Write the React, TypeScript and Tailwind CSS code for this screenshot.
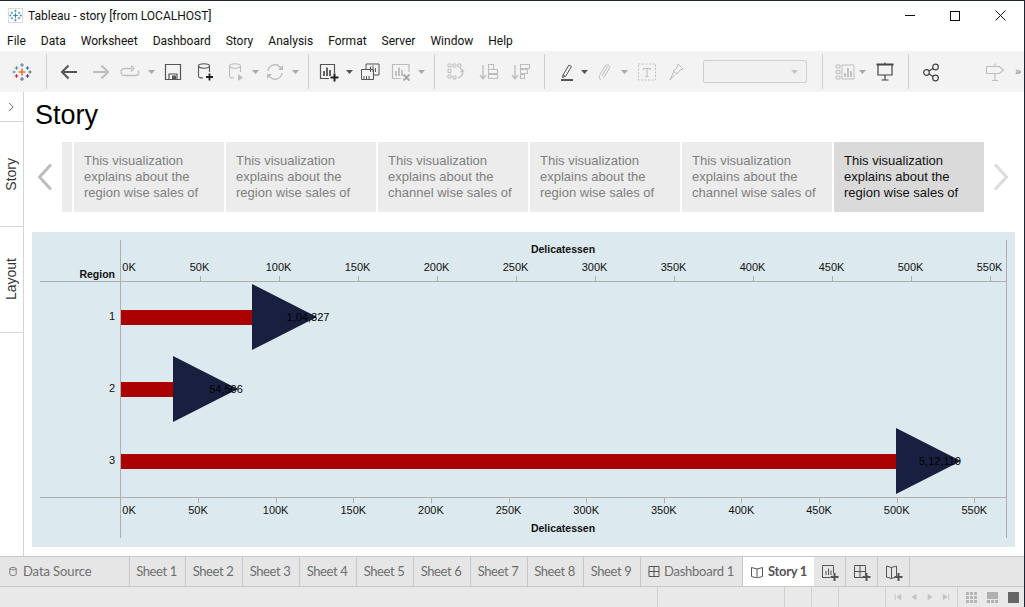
const ON = "#555555";
const OFF = "#bdbdbd";

function Ico({ children, className }: { children: React.ReactNode; className: string }) {
  return (
    <svg viewBox="0 0 20 20" fill="none" className={"w-[20px] h-[20px] shrink-0 " + className}>
      {children}
    </svg>
  );
}

function Caret({ className, color = "#a8a8a8" }: { className: string; color?: string }) {
  return (
    <svg viewBox="0 0 7 4" className={"w-[7px] h-[4px] shrink-0 " + className}>
      <path d="M0 0h7L3.5 4z" fill={color} />
    </svg>
  );
}

function Sep({ className }: { className: string }) {
  return <div className={"w-px h-[35px] bg-[#cfcfcf] shrink-0 " + className} />;
}

function TableauLogo({ size, mono }: { size: number; mono?: string }) {
  const marks: [number, number, number, string][] = [
    [10, 10, 3.4, "#e8762d"],
    [10, 3, 2, "#5b879b"],
    [10, 17, 2, "#5c6692"],
    [4.5, 6, 1.8, "#59879b"],
    [15.5, 6, 1.8, "#1f77b4"],
    [4.5, 14, 1.8, "#c72035"],
    [15.5, 14, 1.8, "#1f447a"],
    [2, 10, 1.6, "#7199a6"],
    [18, 10, 1.6, "#5b6591"],
  ];
  return (
    <svg viewBox="0 0 20 20" width={size} height={size} className="shrink-0">
      {marks.map(([x, y, r, c], i) => (
        <path key={i} d={`M${x - r} ${y}H${x + r}M${x} ${y - r}V${y + r}`} stroke={mono ?? c} strokeWidth={r > 3 ? 1.6 : 1.1} />
      ))}
    </svg>
  );
}

function Toolbar() {
  return (
    <div className="h-[41px] bg-[#f3f3f3] flex items-center shrink-0">
      <div className="ml-[12px]"><TableauLogo size={20} /></div>
      <Sep className="ml-[14px]" />
      <Ico className="ml-[12px]">
        <path d="M18 10H3M9.5 3.5L3 10l6.5 6.5" stroke={ON} strokeWidth="2" />
      </Ico>
      <Ico className="ml-[12px]">
        <path d="M2 10h15M10.5 3.5L17 10l-6.500 6.500" stroke={OFF} strokeWidth="2" />
      </Ico>
      <Ico className="ml-[9px]">
        <path d="M12 6.500H4.500a3 3 0 0 0 0 7h11a3 3 0 0 0 2.500-5M11 3.500l3 3-3 3" stroke={OFF} strokeWidth="1.300" />
      </Ico>
      <Caret className="ml-[8px]" />
      <Ico className="ml-[8px]">
        <path d="M2.500 2.500h15v15h-15z" stroke={ON} strokeWidth="1.200" />
        <path d="M6 17v-5h8v5" stroke={ON} strokeWidth="1.200" />
        <path d="M9 13.500h4v3.500H9z" fill={ON} />
      </Ico>
      <Ico className="ml-[12px]">
        <ellipse cx="9" cy="4" rx="5.500" ry="2.200" stroke={ON} strokeWidth="1.100" />
        <path d="M3.500 4v10c0 1.300 2 2 4.500 2M14.500 4v6" stroke={ON} strokeWidth="1.100" />
        <path d="M14.500 11.500v7M11 15h7" stroke="#222" strokeWidth="1.800" />
      </Ico>
      <Ico className="ml-[11px]">
        <ellipse cx="9" cy="4" rx="5.500" ry="2.200" stroke={OFF} strokeWidth="1.100" />
        <path d="M3.500 4v10c0 1.300 2 2 4.500 2M14.500 4v6" stroke={OFF} strokeWidth="1.100" />
        <path d="M12 12l5 3.500-5 3.500z" fill={OFF} />
      </Ico>
      <Caret className="ml-[6px]" />
      <Ico className="ml-[6px]">
        <path d="M3 9a7 7 0 0 1 12-4l2 2M17 11a7 7 0 0 1-12 4l-2-2" stroke={OFF} strokeWidth="1.300" />
        <path d="M18 3v5h-5zM2 17v-5h5z" fill={OFF} />
      </Ico>
      <Caret className="ml-[7px]" />
      <Sep className="ml-[9px]" />
      <Ico className="ml-[10px]">
        <path d="M15.500 11V2.500h-14v14H10" stroke={ON} strokeWidth="1.200" />
        <path d="M5 14V9M8 14V5.500M11 14V8" stroke={ON} strokeWidth="1.800" />
        <path d="M15.500 11.500v8M11.500 15.500h8" stroke="#222" strokeWidth="2" />
      </Ico>
      <Caret className="ml-[7px]" color="#555" />
      <Ico className="ml-[7px]">
        <path d="M6 7V2h13v11h-5" stroke={ON} strokeWidth="1" />
        <path d="M1.500 7.500h12v10h-12z" stroke={ON} strokeWidth="1" fill="#f3f3f3" />
        <path d="M10.500 10V4.500M13 10V3.500M15.500 10V6M4 17v-3M6.500 17v-3M9 17v-3" stroke={ON} strokeWidth="1" />
      </Ico>
      <Ico className="ml-[11px]">
        <path d="M18 10V2.500H1.500v14H10" stroke={OFF} strokeWidth="1.200" />
        <path d="M5 14V9M8 14V5.500M11 14V8" stroke={OFF} strokeWidth="1.800" />
        <path d="M12.500 12.500l6 6M18.500 12.500l-6 6" stroke="#a5a5a5" strokeWidth="1.800" />
      </Ico>
      <Caret className="ml-[7px]" />
      <Sep className="ml-[9px]" />
      <Ico className="ml-[11px]">
        <path d="M2 2h3v3H2zM7 2h3v3H7zM12 2h3v3h-3zM2 7.500h3v3H2zM2 13h3v3H2zM7 14h3v3H7z" stroke={OFF} strokeWidth="1" />
        <path d="M14 6l3.500 3-3.500 1M17 9c0 4-2 6-5 7" stroke={OFF} strokeWidth="1.200" />
      </Ico>
      <Ico className="ml-[13px]">
        <path d="M4 3v13M1 13l3 4 3-4" stroke={OFF} strokeWidth="1.300" />
        <path d="M9.500 2.500h5v5h-5zM9.500 7.500h9v4h-9zM9.500 12.500h9v4h-9z" stroke={OFF} strokeWidth="1.100" />
      </Ico>
      <Ico className="ml-[12px]">
        <path d="M4 3v13M1 13l3 4 3-4" stroke={OFF} strokeWidth="1.300" />
        <path d="M9.500 2.500h9v4h-9zM9.500 7.500h7v4h-7zM9.500 12.500h4v4h-4z" stroke={OFF} strokeWidth="1.100" />
      </Ico>
      <Sep className="ml-[13px]" />
      <Ico className="ml-[12px]">
        <path d="M8 14l-2-1 6-10 2.500 1.500-6 10zM6 13l-.500 2.500 2.500-1" stroke={ON} strokeWidth="1" />
        <path d="M4 18h12" stroke={ON} strokeWidth="2" />
      </Ico>
      <Caret className="ml-[4px]" color="#555" />
      <Ico className="ml-[7px]">
        <path d="M6 17.500c-2 -.500-2-2.500-1.500-4L10 4c1-1.800 4-1.500 4.500.500L14 7l-5.500 9M7 14l5.500-9.500" stroke={OFF} strokeWidth="1" />
      </Ico>
      <Caret className="ml-[6px]" />
      <Ico className="ml-[9px]">
        <rect x="1.500" y="2" width="17" height="16" stroke={OFF} strokeDasharray="2 1.500" />
        <path d="M6.500 6.500h7M10 6.500v8M8.500 14.500h3M6.500 8V6.500M13.500 8V6.500" stroke={OFF} />
      </Ico>
      <Ico className="ml-[9px]">
        <path d="M12 2l5 5-3 1-3 4-4-3 4-3zM7.500 10l-3.500 8 5-5.500" stroke={OFF} strokeWidth="1" />
      </Ico>
      <div className="ml-[17px] w-[104px] h-[23px] border border-[#cfcfcf] rounded-[2px] bg-[#f1f1f1] flex items-center justify-end pr-[8px] shrink-0">
        <Caret className="" color="#c4c4c4" />
      </div>
      <Sep className="ml-[15px]" />
      <Ico className="ml-[12px]">
        <path d="M1 3h4v3H1zM1 8.500h4v3H1zM1 14h4v3H1zM7 3h12v14H7z" stroke={OFF} strokeWidth="1" />
        <path d="M10 15v-4M13 15V6M16 15V9" stroke={OFF} strokeWidth="1.800" />
      </Ico>
      <Caret className="ml-[4px]" />
      <Ico className="ml-[9px]">
        <path d="M1.500 2.500h17" stroke="#444" strokeWidth="2" />
        <path d="M3 3v10h14V3M10 13v5M6.500 18h7M10 .5V2" stroke="#444" strokeWidth="1.200" />
      </Ico>
      <Sep className="ml-[13px]" />
      <Ico className="ml-[12px]">
        <circle cx="5.500" cy="10.500" r="2.800" stroke="#444" strokeWidth="1.200" />
        <circle cx="14.500" cy="5" r="2.800" stroke="#444" strokeWidth="1.200" />
        <circle cx="14.500" cy="16" r="2.800" stroke="#444" strokeWidth="1.200" />
        <path d="M8 9l4-2.500M8 12l4 2.500" stroke="#444" strokeWidth="1.200" />
      </Ico>
      <Ico className="ml-[44px]">
        <path d="M1.500 4.500h13l4 3.500-4 3.500h-13zM10 1.500v3M10 11.500v7M7 18.500h6" stroke={OFF} strokeWidth="1.100" />
      </Ico>
      <span className="ml-[10px] text-[11px] leading-none text-[#777] font-['Liberation_Sans',sans-serif]">»</span>
    </div>
  );
}

const cardTexts = ["region", "region", "channel", "region", "channel", "region"];

function StoryCards() {
  return (
    <div className="flex items-center mt-[11px] h-[70px] shrink-0">
      <svg viewBox="0 0 16 28" className="w-[16px] h-[28px] ml-[13px] shrink-0">
        <path d="M14 1.500L2.500 14 14 26.500" stroke="#bdbdbd" strokeWidth="3" fill="none" />
      </svg>
      <div className="ml-[9px] w-[10px] h-[70px] bg-[#ececec] shrink-0" />
      {cardTexts.map((t, i) => {
        const active = i === 5;
        return (
          <div
            key={i}
            className={
              "ml-[2px] w-[150px] h-[70px] pl-[10px] pt-[11px] text-[13px] leading-[16px] shrink-0 " +
              (active ? "bg-[#dadada] text-[#111]" : "bg-[#ececec] text-[#7f7f7f]")
            }
          >
            <div>This visualization</div>
            <div>explains about the</div>
            <div>{t} wise sales of</div>
          </div>
        );
      })}
      <svg viewBox="0 0 16 28" className="w-[16px] h-[28px] ml-[9px] shrink-0">
        <path d="M2 1.500L13.500 14 2 26.500" stroke="#dcdcdc" strokeWidth="3" fill="none" />
      </svg>
    </div>
  );
}

const topTicks = ["50K", "100K", "150K", "200K", "250K", "300K", "350K", "400K", "450K", "500K", "550K"];

function Chart() {
  const rows = [
    { id: "1", y: 317, end: 252, label: "1,04,327", lx: 308 },
    { id: "2", y: 389, end: 173, label: "54,506", lx: 226 },
    { id: "3", y: 461, end: 896, label: "5,12,110", lx: 940 },
  ];
  return (
    <div className="ml-[8px] mt-[20px] w-[983px] h-[315px] bg-[#dce9ee] shrink-0">
      <svg viewBox="32 232 983 315" className="w-[983px] h-[315px] block" fontSize="11" fill="#111">
        <path d="M120.500 240v298M1006.500 240v298M40 281.500h967M40 497.500h967" stroke="#aeaeae" strokeWidth="1" />
        <text x="563" y="253" textAnchor="middle" fontWeight="700" fontSize="10.500">Delicatessen</text>
        <text x="563" y="532" textAnchor="middle" fontWeight="700" fontSize="10.500">Delicatessen</text>
        <text x="115" y="278" textAnchor="end" fontWeight="700" fontSize="10.500">Region</text>
        <text x="129" y="271" textAnchor="middle">0K</text>
        <text x="129" y="514" textAnchor="middle">0K</text>
        {topTicks.map((t, i) => {
          const x = 199.5 + i * 79;
          const bx = 198 + i * 77.63;
          return (
            <g key={t}>
              <path d={`M${Math.round(x) + 0.5} 276v5`} stroke="#aeaeae" />
              <text x={x} y="271" textAnchor="middle">{t}</text>
              <path d={`M${Math.round(bx) + 0.5} 498v5`} stroke="#aeaeae" />
              <text x={bx} y="514" textAnchor="middle">{t}</text>
            </g>
          );
        })}
        {rows.map((r) => (
          <g key={r.id}>
            <text x="115" y={r.y + 3} textAnchor="end">{r.id}</text>
            <rect x="121" y={r.y - 7} width={r.end - 121} height="15" fill="#aa0000" />
            <path d={`M${r.end} ${r.y - 33}L${r.end + 65} ${r.y}L${r.end} ${r.y + 33}z`} fill="#19203f" />
            <text x={r.lx} y={r.y + 4} textAnchor="middle" fill="#000">{r.label}</text>
          </g>
        ))}
      </svg>
    </div>
  );
}

function RailItem({ label, className }: { label: string; className: string }) {
  return (
    <div className={"flex items-center justify-center border-b border-[#d4d4d4] shrink-0 " + className}>
      <span className="[writing-mode:vertical-rl] rotate-180 text-[14px] text-[#333]">{label}</span>
    </div>
  );
}

const sheets = ["Sheet 1", "Sheet 2", "Sheet 3", "Sheet 4", "Sheet 5", "Sheet 6", "Sheet 7", "Sheet 8", "Sheet 9"];

function TabIcon({ kind }: { kind: "sheet" | "dash" | "story" }) {
  return (
    <Ico className="">
      {kind === "sheet" && (
        <>
          <path d="M13.500 11V3.500h-11v12H10" stroke="#555" />
          <path d="M6 13V9M8.500 13V6.500M11 13V8.500" stroke="#555" />
        </>
      )}
      {kind === "dash" && <path d="M2.500 3.500h11v12h-11zM2.500 9.500h11M8 3.500v12" stroke="#555" />}
      {kind === "story" && <path d="M2.500 4l5 1.500 5-1.500v11l-5 1.500-5-1.500zM7.500 5.500v11" stroke="#555" />}
      <path d="M14.500 11v8M10.500 15h8" stroke="#555" strokeWidth="2" />
    </Ico>
  );
}

function Tabs() {
  return (
    <div className="h-[31px] bg-[#e6e6e6] border-t border-b border-[#c8c8c8] flex items-stretch shrink-0 text-[13px] text-[#6e6e6e] font-['Lato',sans-serif]">
      <div className="w-[130px] border-r border-[#c8c8c8] flex items-center pl-[9px] shrink-0">
        <svg viewBox="0 0 10 12" className="w-[8px] h-[11px] shrink-0">
          <path d="M1 2.500v7c0 2 8 2 8 0v-7c0-2-8-2-8 0c0 1.800 8 1.800 8 0" stroke="#666" fill="none" />
        </svg>
        <span className="ml-[6px] tracking-[-0.1px]">Data Source</span>
      </div>
      {sheets.map((s, i) => (
        <div
          key={s}
          className={"border-r border-[#c8c8c8] flex items-center justify-center pr-[2px] shrink-0 tracking-[-0.4px] " + (i === 0 || i === 7 ? "w-[56px]" : "w-[57px]")}
        >
          {s}
        </div>
      ))}
      <div className="w-[102px] border-r border-[#c8c8c8] flex items-center pl-[7px] shrink-0">
        <svg viewBox="0 0 12 11" className="w-[12px] h-[11px] shrink-0">
          <path d="M1 .5h10v10H1zM1 5.500h10M6 .5v10" stroke="#555" fill="none" />
        </svg>
        <span className="ml-[4px] tracking-[-0.25px]">Dashboard 1</span>
      </div>
      <div className="w-[71px] bg-white flex items-center pl-[8px] shrink-0">
        <svg viewBox="0 0 12 12" className="w-[12px] h-[12px] shrink-0">
          <path d="M.5 1.500l5.500 1.500 5.500-1.500v9L6 12 .5 10.500zM6 3v9" stroke="#555" fill="none" />
        </svg>
        <span className="ml-[5px] font-bold text-[#555] tracking-[-0.3px]">Story 1</span>
      </div>
      {(["sheet", "dash", "story"] as const).map((k) => (
        <div key={k} className="w-[32px] border-r border-[#c8c8c8] flex items-center justify-center shrink-0">
          <TabIcon kind={k} />
        </div>
      ))}
    </div>
  );
}

function StatusBar() {
  const d = "h-[20px] border-r border-[#d0d0d0] shrink-0";
  return (
    <div className="h-[20px] bg-[#e9e9e9] flex items-center shrink-0">
      <div className={d + " w-[658px]"} />
      <div className={d + " w-[127px]"} />
      <div className={d + " w-[27px]"} />
      <div className={d + " w-[27px]"} />
      <div className={d + " w-[47px]"} />
      <svg viewBox="0 0 10 10" className="w-[8px] h-[8px] ml-[8px] shrink-0">
        <path d="M1 1v8h1V1zM9 1v8L3 5z" fill="#c2c2c2" />
      </svg>
      <svg viewBox="0 0 10 10" className="w-[8px] h-[8px] ml-[8px] shrink-0">
        <path d="M8 1v8L2 5z" fill="#c2c2c2" />
      </svg>
      <svg viewBox="0 0 10 10" className="w-[8px] h-[8px] ml-[8px] shrink-0">
        <path d="M2 1v8l6-4z" fill="#c2c2c2" />
      </svg>
      <svg viewBox="0 0 10 10" className="w-[8px] h-[8px] ml-[8px] shrink-0">
        <path d="M1 1v8l6-4zM8 1v8h1V1z" fill="#c2c2c2" />
      </svg>
      <div className="w-px h-[20px] bg-[#d0d0d0] ml-[7px] shrink-0" />
      <svg viewBox="0 0 11 11" className="w-[11px] h-[11px] ml-[8px] shrink-0">
        <path d="M0 0h3v3H0zM4 0h3v3H4zM8 0h3v3H8zM0 4h3v3H0zM4 4h3v3H4zM8 4h3v3H8zM0 8h3v3H0zM4 8h3v3H4zM8 8h3v3H8z" fill="#b5b5b5" />
      </svg>
      <svg viewBox="0 0 11 11" className="w-[11px] h-[11px] ml-[10px] shrink-0">
        <path d="M0 0h11v7H0zM0 8h3v3H0zM4 8h3v3H4zM8 8h3v3H8z" fill="#b0b0b0" />
      </svg>
      <div className="w-[11px] h-[11px] ml-[10px] bg-[#666] shrink-0" />
    </div>
  );
}

export default function App() {
  return (
    <div className="w-[1025px] h-[607px] bg-white overflow-hidden flex flex-col border-t border-r border-[#1c2536] font-['Liberation_Sans',Arial,sans-serif]">
      <div className="h-[29px] flex items-center shrink-0 text-[12px] text-[#111] font-['Roboto',sans-serif]">
        <div className="ml-[8px] w-[15px] h-[15px] border border-[#dadada] flex items-center justify-center shrink-0">
          <TableauLogo size={13} mono="#2f7fb0" />
        </div>
        <span className="ml-[5px]">Tableau - story [from LOCALHOST]</span>
        <div className="ml-auto flex items-center">
          <div className="w-[10px] h-px bg-[#111]" />
          <div className="ml-[35px] w-[10px] h-[10px] border border-[#111]" />
          <svg viewBox="0 0 11 11" className="ml-[35px] mr-[18px] w-[11px] h-[11px]">
            <path d="M.5.5l10 10M10.500.5l-10 10" stroke="#111" />
          </svg>
        </div>
      </div>
      <nav className="h-[21px] flex items-center gap-[15px] pl-[7px] shrink-0 text-[12px] text-[#111] font-['Roboto',sans-serif]">
        {["File", "Data", "Worksheet", "Dashboard", "Story", "Analysis", "Format", "Server", "Window", "Help"].map((m) => (
          <span key={m}>{m}</span>
        ))}
      </nav>
      <Toolbar />
      <div className="flex-1 min-h-0 flex">
        <div className="w-[24px] border-r border-[#d4d4d4] flex flex-col shrink-0">
          <div className="h-[30px] border-b border-[#d4d4d4] flex items-center justify-center shrink-0">
            <svg viewBox="0 0 8 12" className="w-[7px] h-[10px]">
              <path d="M1 1l5 5-5 5" stroke="#666" strokeWidth="1.200" fill="none" />
            </svg>
          </div>
          <RailItem label="Story" className="h-[105px]" />
          <RailItem label="Layout" className="h-[106px]" />
        </div>
        <div className="flex-1 min-w-0 flex flex-col">
          <h1 className="text-[27px] leading-[31px] text-black pl-[11px] mt-[8px] shrink-0">Story</h1>
          <StoryCards />
          <Chart />
        </div>
      </div>
      <Tabs />
      <StatusBar />
    </div>
  );
}
